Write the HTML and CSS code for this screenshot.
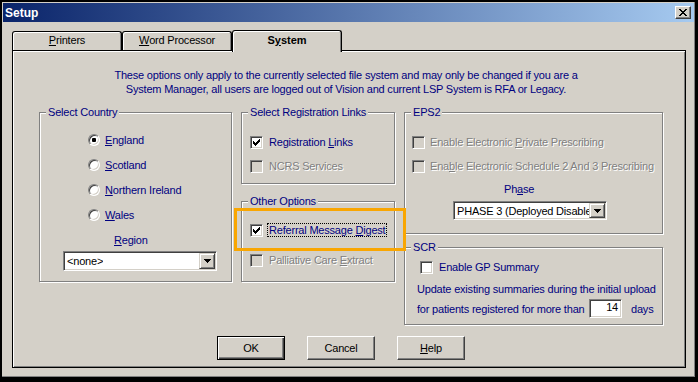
FILE: index.html
```html
<!DOCTYPE html>
<html lang="en">
<head>
  <meta charset="UTF-8" />
  <title>Setup</title>
  <link rel="stylesheet" href="styles.css">
</head>
<body>
  <div class="window">
    <!-- title bar -->
    <div class="titlebar">
      <span class="title">Setup</span>
      <span class="close-btn">
        <svg width="8" height="7" viewBox="0 0 8 7" shape-rendering="crispEdges"><path d="M0 0h2v1H0z M6 0h2v1H6z M1 1h2v1H1z M5 1h2v1H5z M2 2h4v1H2z M3 3h2v1H3z M2 4h4v1H2z M1 5h2v1H1z M5 5h2v1H5z M0 6h2v1H0z M6 6h2v1H6z"/></svg>
      </span>
    </div>

    <div class="dialog">
      <!-- tabs -->
      <div class="tabs">
        <div class="tab"><u>P</u>rinters</div>
        <div class="tab"><u>W</u>ord Processor</div>
        <div class="tab active">S<u>y</u>stem</div>
      </div>

      <div class="tab-panel">
        <p class="notice">These options only apply to the currently selected file system and may only be changed if you are a<br>System Manager, all users are logged out of Vision and current LSP System is RFA or Legacy.</p>

        <div class="columns">
          <!-- country -->
          <div class="group country">
            <span class="group-title">Select Country</span>
            <div class="radios">
              <div class="opt"><span class="radio"><span class="dot"></span></span><span class="label"><u>E</u>ngland</span></div>
              <div class="opt"><span class="radio"></span><span class="label"><u>S</u>cotland</span></div>
              <div class="opt"><span class="radio"></span><span class="label"><u>N</u>orthern Ireland</span></div>
              <div class="opt"><span class="radio"></span><span class="label"><u>W</u>ales</span></div>
            </div>
            <div class="region-label"><u>R</u>egion</div>
            <div class="combo region-combo">
              <span class="combo-text">&lt;none&gt;</span>
              <span class="combo-btn"><svg width="7" height="4" viewBox="0 0 7 4" shape-rendering="crispEdges"><path d="M0 0h7v1H0z M1 1h5v1H1z M2 2h3v1H2z M3 3h1v1H3z"/></svg></span>
            </div>
          </div>

          <!-- registration links / other options -->
          <div class="col">
            <div class="group reg-links">
              <span class="group-title">Select Registration Links</span>
              <div class="checks">
                <div class="opt"><span class="check"><svg width="7" height="7" viewBox="0 0 7 7" shape-rendering="crispEdges"><path d="M6 0h1v1H6z M5 1h2v1H5z M0 2h1v1H0z M4 2h3v1H4z M0 3h2v1H0z M3 3h3v1H3z M0 4h5v1H0z M1 5h3v1H1z M2 6h1v1H2z"/></svg></span><span class="label">Registration <u>L</u>inks</span></div>
                <div class="opt disabled"><span class="check"></span><span class="label">NCRS Services</span></div>
              </div>
            </div>
            <div class="group other-options">
              <span class="group-title">Other Options</span>
              <div class="checks">
                <div class="opt"><span class="check"><svg width="7" height="7" viewBox="0 0 7 7" shape-rendering="crispEdges"><path d="M6 0h1v1H6z M5 1h2v1H5z M0 2h1v1H0z M4 2h3v1H4z M0 3h2v1H0z M3 3h3v1H3z M0 4h5v1H0z M1 5h3v1H1z M2 6h1v1H2z"/></svg></span><span class="label focus">Referral Message <u>D</u>igest</span></div>
                <div class="opt disabled"><span class="check"></span><span class="label">Palliative Care <u>E</u>xtract</span></div>
              </div>
            </div>
          </div>

          <!-- eps2 / scr -->
          <div class="col">
            <div class="group eps2">
              <span class="group-title">EPS2</span>
              <div class="checks">
                <div class="opt disabled"><span class="check"></span><span class="label">Enable Electronic <u>P</u>rivate Prescribing</span></div>
                <div class="opt disabled"><span class="check"></span><span class="label">Ena<u>b</u>le Electronic Schedule 2 And 3 Prescribing</span></div>
              </div>
              <div class="phase-label">Ph<u>a</u>se</div>
              <div class="combo phase-combo">
                <span class="combo-text">PHASE 3 (Deployed Disable</span>
                <span class="combo-btn"><svg width="7" height="4" viewBox="0 0 7 4" shape-rendering="crispEdges"><path d="M0 0h7v1H0z M1 1h5v1H1z M2 2h3v1H2z M3 3h1v1H3z"/></svg></span>
              </div>
            </div>
            <div class="group scr">
              <span class="group-title">SCR</span>
              <div class="opt scr-check"><span class="check"></span><span class="label">Enable GP Summary</span></div>
              <div class="scr-text">Update existing summaries during the initial upload</div>
              <div class="scr-days">
                <span class="scr-days-label">for patients registered for more than</span>
                <span class="num-box">14</span>
                <span class="scr-days-unit">days</span>
              </div>
            </div>
          </div>
        </div>

        <div class="buttons">
          <button class="btn default">OK</button>
          <button class="btn">Cancel</button>
          <button class="btn"><u>H</u>elp</button>
        </div>
      </div>
    </div>

    <!-- highlight around the option -->
    <div class="highlight"></div>
  </div>
</body>
</html>
```

FILE: styles.css
```css
* {
  box-sizing: border-box;
}

html, body {
  margin: 0;
  background: #000;
}

body {
  font-family: "Liberation Sans", Arial, sans-serif;
  font-size: 11px;
  line-height: 14px;
  letter-spacing: -0.2px;
  color: #000;
}

/* window frame */
.window {
  position: relative;
  width: 698px;
  height: 382px;
  display: flex;
  flex-direction: column;
  padding: 1px;
  background: #d4d0c8;
  border-style: solid;
  border-color: #000;
  border-width: 2px 3px 5px 2px;
  box-shadow: inset -1px -1px 0 #808080;
}

.titlebar {
  height: 19px;
  display: flex;
  align-items: center;
  justify-content: space-between;
  padding: 0 3px 0 2px;
  background: linear-gradient(to right, #0a246a, #a6caf0);
  color: #fff;
  font-size: 12px;
  font-weight: bold;
  letter-spacing: 0;
}

.close-btn {
  width: 16px;
  height: 13px;
  display: flex;
  align-items: center;
  justify-content: center;
  background: #d4d0c8;
  border: 1px solid;
  border-color: #fff #404040 #404040 #fff;
  box-shadow: inset -1px -1px 0 #808080;
}

.dialog {
  flex: 1;
  display: flex;
  flex-direction: column;
  padding: 8px 8px 8px 9px;
}

/* tabs */
.tabs {
  height: 20px;
  display: flex;
  align-items: flex-end;
}

.tab {
  width: 110px;
  height: 19px;
  display: flex;
  align-items: center;
  justify-content: center;
  padding-bottom: 2px;
  border: 1px solid #000;
  border-bottom: none;
  border-radius: 3px 3px 0 0;
  box-shadow: inset 1px 1px 0 #fff, inset -1px 0 0 #808080;
  background: #d4d0c8;
}

.tab.active {
  position: relative;
  z-index: 1;
  height: 22px;
  margin-bottom: -2px;
  padding-bottom: 3px;
  font-weight: bold;
  letter-spacing: 0;
}

.tab-panel {
  flex: 1;
  padding: 17px 0 0;
  border: 1px solid #000;
  box-shadow: inset 1px 1px 0 #fff, inset -1px -1px 0 #808080;
}

.notice {
  margin: 0;
  padding-right: 6px;
  text-align: center;
  color: #000080;
}

.columns {
  display: flex;
  align-items: flex-start;
  gap: 9px;
  margin: 16px 0 0 26px;
}

.col {
  display: flex;
  flex-direction: column;
}

/* group boxes */
.group {
  border: 1px solid #808080;
  box-shadow: inset 1px 1px 0 #fff, 1px 1px 0 #fff;
  color: #000080;
}

.group-title {
  display: block;
  width: max-content;
  margin: -8px 0 0 6px;
  padding: 0 2px;
  background: #d4d0c8;
}

.opt {
  display: flex;
  align-items: center;
  height: 24px;
}

.label {
  margin-left: 6px;
  white-space: nowrap;
}

.disabled .label {
  color: #808080;
  text-shadow: 1px 1px 0 #fff;
}

.focus {
  margin-left: 4px;
  padding: 0 1px;
  line-height: 12px;
  border: 1px dotted #000;
}

.check {
  width: 13px;
  height: 13px;
  flex-shrink: 0;
  display: flex;
  align-items: center;
  justify-content: center;
  background: #fff;
  border: 1px solid;
  border-color: #808080 #fff #fff #808080;
  box-shadow: inset 1px 1px 0 #404040, inset -1px -1px 0 #d4d0c8;
}

.disabled .check {
  background: #d4d0c8;
}

.radio {
  width: 12px;
  height: 12px;
  flex-shrink: 0;
  display: flex;
  align-items: center;
  justify-content: center;
  background: #fff;
  border: 1px solid;
  border-color: #808080 #fff #fff #808080;
  border-radius: 50%;
  box-shadow: inset 1px 1px 0 #404040, inset -1px -1px 0 #d4d0c8;
}

.dot {
  width: 4px;
  height: 4px;
  border-radius: 1px;
  background: #000;
}

/* select country */
.country {
  width: 193px;
  height: 170px;
}

.radios {
  margin: 8px 0 0 48px;
}

.radios .opt {
  height: 25px;
}

.radios .label {
  margin-left: 5px;
}

.region-label {
  margin: 6px 0 0 74px;
}

.combo {
  display: flex;
  justify-content: space-between;
  padding: 1px;
  background: #fff;
  border: 1px solid;
  border-color: #808080 #fff #fff #808080;
  box-shadow: inset 1px 1px 0 #404040, inset -1px -1px 0 #d4d0c8;
  color: #000;
  overflow: hidden;
}

.combo-text {
  padding-left: 2px;
  white-space: nowrap;
  overflow: hidden;
  align-self: center;
}

.combo-btn {
  width: 16px;
  flex-shrink: 0;
  display: flex;
  align-items: center;
  justify-content: center;
  background: #d4d0c8;
  border: 1px solid;
  border-color: #d4d0c8 #404040 #404040 #d4d0c8;
  box-shadow: inset 1px 1px 0 #fff, inset -1px -1px 0 #808080;
}

.region-combo {
  width: 154px;
  height: 20px;
  margin: 4px 0 0 23px;
}

/* registration links / other options */
.reg-links {
  width: 154px;
  height: 72px;
}

.reg-links .checks,
.eps2 .checks {
  margin-top: 11px;
}

.checks {
  margin-left: 8px;
}

.other-options {
  width: 154px;
  height: 81px;
  margin-top: 17px;
}

.other-options .checks {
  display: flex;
  flex-direction: column;
  gap: 6px;
  margin-top: 10px;
}

/* eps2 */
.eps2 {
  width: 259px;
  height: 122px;
}

.eps2 .checks {
  margin-left: 7px;
}

.eps2 .label {
  margin-left: 5px;
}

.phase-label {
  margin: 4px 0 0 99px;
}

.phase-combo {
  width: 154px;
  height: 19px;
  margin: 5px 0 0 48px;
}

/* scr */
.scr {
  width: 259px;
  height: 78px;
  margin-top: 13px;
}

.scr-check {
  height: 20px;
  margin: 3px 0 0 15px;
}

.scr-text {
  margin: 5px 0 0 12px;
}

.scr-days {
  display: flex;
  align-items: center;
  height: 19px;
  margin: 3px 0 0 12px;
}

.scr-days-label {
  width: 172px;
}

.num-box {
  width: 33px;
  height: 19px;
  padding-right: 3px;
  text-align: right;
  background: #fff;
  border: 1px solid;
  border-color: #808080 #fff #fff #808080;
  box-shadow: inset 1px 1px 0 #404040, inset -1px -1px 0 #d4d0c8;
  color: #000;
}

.scr-days-unit {
  margin-left: 9px;
}

/* buttons */
.buttons {
  display: flex;
  gap: 22px;
  margin: 11px 0 0 204px;
}

.btn {
  width: 68px;
  height: 24px;
  padding: 0;
  font: inherit;
  letter-spacing: inherit;
  color: #000;
  background: #d4d0c8;
  border: 1px solid;
  border-color: #fff #404040 #404040 #fff;
  box-shadow: inset -1px -1px 0 #808080;
}

.btn.default {
  border-color: #000;
  box-shadow: inset 1px 1px 0 #fff, inset -1px -1px 0 #404040, inset -2px -2px 0 #808080;
}

/* orange annotation */
.highlight {
  position: absolute;
  left: 232px;
  top: 206px;
  width: 172px;
  height: 43px;
  border: 3px solid #f9a602;
}
```
